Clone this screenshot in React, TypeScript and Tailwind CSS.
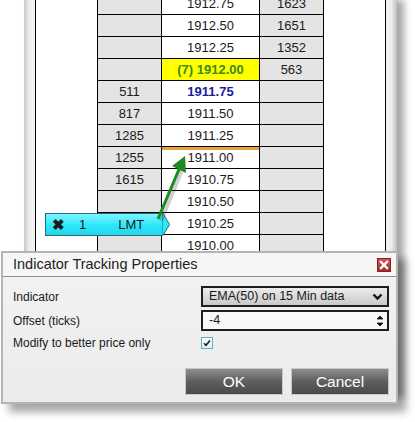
import React from 'react';

type Row = { bid?: string; price: string; ask?: string; kind?: 'last' | 'blue' | 'marker' };

const rows: Row[] = [
  { price: '1912.75', ask: '1623' },
  { price: '1912.50', ask: '1651' },
  { price: '1912.25', ask: '1352' },
  { price: '(7) 1912.00', ask: '563', kind: 'last' },
  { bid: '511', price: '1911.75', kind: 'blue' },
  { bid: '817', price: '1911.50' },
  { bid: '1285', price: '1911.25' },
  { bid: '1255', price: '1911.00', kind: 'marker' },
  { bid: '1615', price: '1910.75' },
  { price: '1910.50' },
  { price: '1910.25' },
  { price: '1910.00' },
  { price: '1909.75' },
];

const LadderRow: React.FC<{ row: Row }> = ({ row }) => {
  let priceClass = 'bg-white text-[#1a1a1a]';
  if (row.kind === 'last') priceClass = 'bg-[#ffff00] text-[#3c8a14] font-bold';
  if (row.kind === 'blue') priceClass = 'bg-white text-[#1c1c9c] font-bold';

  return (
    <div className="flex h-[22px] border-b border-black">
      <div className="w-[64px] border-r border-black bg-[#e4e4e4] flex items-center justify-center">{row.bid}</div>
      <div className={`relative w-[98px] border-r border-black flex items-center justify-center ${priceClass}`}>
        {row.kind === 'marker' && <div className="absolute left-0 right-0 top-0 h-[3px] bg-[#eaa23a]" />}
        {row.price}
      </div>
      <div className="w-[64px] border-r border-black bg-[#e4e4e4] flex items-center justify-center">{row.ask}</div>
    </div>
  );
};

export default function App() {
  return (
    <div className="relative w-[415px] h-[422px] overflow-hidden bg-white text-[13px] text-[#1a1a1a] font-['Liberation_Sans',Arial,sans-serif]">
      {/* Window frame */}
      <div className="ml-[24px] w-[373px] h-[398px] flex overflow-hidden shadow-[7px_0_7px_rgba(0,0,0,0.35)]">
        <div className="w-[11px] bg-gradient-to-r from-[#c9c9c9] via-[#efefef] to-[#f6f6f6]" />
        <div className="w-[351px] border-x border-black bg-white pl-[61px]">
          <div className="mt-[-7px] w-[227px] border-l border-black">
            {rows.map((r) => (
              <LadderRow key={r.price} row={r} />
            ))}
          </div>
        </div>
        <div className="w-[11px] bg-gradient-to-r from-[#f4f4f4] via-[#ececec] to-[#bdbdbd]" />
      </div>

      {/* Order tag */}
      <div className="absolute left-[45px] top-[213px] h-[23px] flex">
        <div className="w-[117px] h-full flex items-center border border-r-0 border-[#2a6b75] bg-gradient-to-b from-[#7af4ff] via-[#2ee8fb] to-[#22d8ea] text-[13px]">
          <span className="ml-[6px] font-bold text-[15px] leading-none">✖</span>
          <span className="ml-[14px]">1</span>
          <span className="ml-[32px]">LMT</span>
        </div>
        <svg width="8" height="23" viewBox="0 0 8 23" className="block">
          <polygon points="0,0.5 1,0.5 7.5,11.5 1,22.5 0,22.5" fill="#2ee8fb" stroke="#2a6b75" strokeWidth="1" />
        </svg>
      </div>

      {/* Green arrow */}
      <svg className="absolute left-0 top-0" width="415" height="422" viewBox="0 0 415 422">
        <line x1="161" y1="221" x2="182" y2="170" stroke="rgba(0,0,0,0.18)" strokeWidth="4" />
        <line x1="158" y1="219" x2="180" y2="167" stroke="#1d8a22" strokeWidth="3" />
        <polygon points="185,156 186,173 172,166" fill="#1d8a22" />
      </svg>

      {/* Dialog */}
      <div className="absolute left-[1px] top-[251px] w-[397px] h-[153px] border-2 border-[#b4b4b4] bg-gradient-to-b from-[#f3f3f3] to-[#ebebeb] shadow-[8px_8px_8px_rgba(0,0,0,0.35)] flex flex-col text-[12px]">
        <div className="h-[24px] flex items-center justify-between border-b border-[#8c8c8c] bg-[#f6f6f6] pl-[10px] pr-[5px]">
          <span className="text-[14.5px] text-[#222]">Indicator Tracking Properties</span>
          <div className="w-[14px] h-[14px] bg-gradient-to-b from-[#d25454] to-[#a82828] border border-[#8a2020] flex items-center justify-center">
            <svg width="10" height="10" viewBox="0 0 10 10">
              <path d="M2 2 L8 8 M8 2 L2 8" stroke="white" strokeWidth="2.4" strokeLinecap="square" />
            </svg>
          </div>
        </div>

        <div className="flex flex-col pl-[10px] pt-[9px]">
          <div className="flex items-center h-[21px]">
            <span className="w-[188px]">Indicator</span>
            <div className="w-[188px] h-[21px] border-2 border-[#1e1e1e] bg-gradient-to-b from-[#ececec] to-[#c9c9c9] flex items-center justify-between pl-[6px] pr-[4px] text-[12.5px]">
              <span>EMA(50) on 15 Min data</span>
              <svg width="11" height="8" viewBox="0 0 11 8">
                <path d="M1.5 1.5 L5.5 5.5 L9.5 1.5" fill="none" stroke="#111" strokeWidth="2.4" />
              </svg>
            </div>
          </div>
          <div className="flex items-center h-[21px] mt-[3px]">
            <span className="w-[188px]">Offset (ticks)</span>
            <div className="w-[188px] h-[21px] border-2 border-[#1e1e1e] bg-[#f7f7f7] flex items-center justify-between pl-[6px] pr-[3px] text-[12.5px]">
              <span>-4</span>
              <svg width="8" height="14" viewBox="0 0 8 14">
                <path d="M1 5 L4 2 L7 5 Z" fill="#111" stroke="#111" strokeWidth="0.8" />
                <path d="M1 9 L4 12 L7 9 Z" fill="#111" stroke="#111" strokeWidth="0.8" />
              </svg>
            </div>
          </div>
          <div className="flex items-center h-[19px] mt-[2px]">
            <span className="w-[188px]">Modify to better price only</span>
            <div className="w-[12px] h-[12px] border border-[#5fb3c6] bg-gradient-to-b from-[#ffffff] to-[#e2eef2] flex items-center justify-center">
              <svg width="8" height="8" viewBox="0 0 8 8">
                <path d="M1 4.2 L3 6.2 L7 1.5" fill="none" stroke="#1a1a1a" strokeWidth="1.6" />
              </svg>
            </div>
          </div>
        </div>

        <div className="flex justify-end gap-[8px] pr-[7px] mt-[16px]">
          <button className="w-[98px] h-[27px] border border-[#c8c8c8] bg-gradient-to-b from-[#8e8e8e] via-[#5e5e5e] to-[#4a4a4a] text-white text-[15.5px]">
            OK
          </button>
          <button className="w-[98px] h-[27px] border border-[#c8c8c8] bg-gradient-to-b from-[#8e8e8e] via-[#5e5e5e] to-[#4a4a4a] text-white text-[15.5px]">
            Cancel
          </button>
        </div>
      </div>
    </div>
  );
}
